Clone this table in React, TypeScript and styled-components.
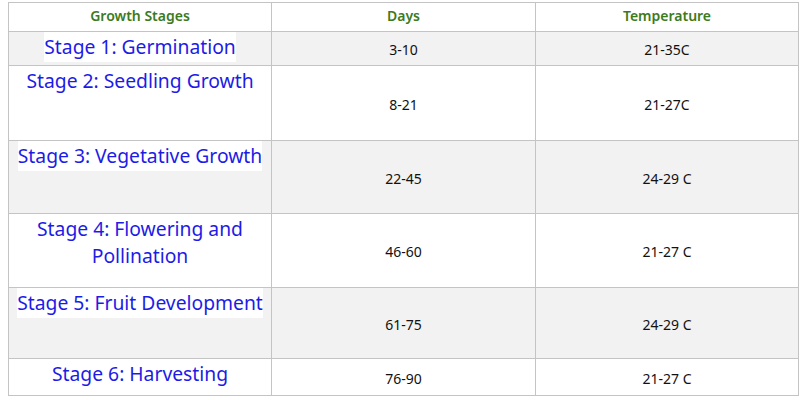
import styled, { createGlobalStyle } from "styled-components";

const GlobalStyle = createGlobalStyle`
  html, body {
    margin: 0;
    padding: 0;
    background: #ffffff;
  }
`;

const Page = styled.div`
  padding: 2px 2px 0 8px;
  width: 790px;
`;

const Table = styled.table`
  width: 790px;
  border-collapse: collapse;
  table-layout: fixed;
  font-family: "Noto Sans", "Open Sans", sans-serif;
`;

const HeadCell = styled.th`
  height: 25px;
  padding: 0 0 3px;
  border: 1px solid #c4c4c4;
  color: #3c7a1e;
  font-size: 14px;
  font-weight: 600;
  text-align: center;
  vertical-align: middle;
`;

const Row = styled.tr<{ $shaded: boolean; $height: number }>`
  height: ${({ $height }) => $height}px;
  background: ${({ $shaded }) => ($shaded ? "#f2f2f2" : "#ffffff")};
`;

const StageCell = styled.td`
  padding: 1px 4px 0;
  border: 1px solid #c4c4c4;
  text-align: center;
  vertical-align: top;
`;

const StageText = styled.span`
  background: #ffffff;
  color: #1c1ce6;
  font-size: 19.3px;
  line-height: 27px;
  padding: 1px 0 2px;
`;

const ValueCell = styled.td`
  padding: 2px 0 0;
  border: 1px solid #c4c4c4;
  color: #111111;
  font-size: 14px;
  text-align: center;
  vertical-align: middle;
`;

const stages = [
  { name: "Stage 1: Germination", days: "3-10", temp: "21-35C", height: 34 },
  { name: "Stage 2: Seedling Growth", days: "8-21", temp: "21-27C", height: 75 },
  { name: "Stage 3: Vegetative Growth", days: "22-45", temp: "24-29 C", height: 73 },
  { name: "Stage 4: Flowering and Pollination", days: "46-60", temp: "21-27 C", height: 74 },
  { name: "Stage 5: Fruit Development", days: "61-75", temp: "24-29 C", height: 71 },
  { name: "Stage 6: Harvesting", days: "76-90", temp: "21-27 C", height: 37 },
];

export default function App() {
  return (
    <Page>
      <GlobalStyle />
      <Table>
        <colgroup>
          <col style={{ width: 263 }} />
          <col style={{ width: 264 }} />
          <col style={{ width: 263 }} />
        </colgroup>
        <thead>
          <tr>
            <HeadCell>Growth Stages</HeadCell>
            <HeadCell>Days</HeadCell>
            <HeadCell>Temperature</HeadCell>
          </tr>
        </thead>
        <tbody>
          {stages.map((s, i) => (
            <Row key={s.name} $shaded={i % 2 === 0} $height={s.height}>
              <StageCell>
                <StageText>{s.name}</StageText>
              </StageCell>
              <ValueCell>{s.days}</ValueCell>
              <ValueCell>{s.temp}</ValueCell>
            </Row>
          ))}
        </tbody>
      </Table>
    </Page>
  );
}
